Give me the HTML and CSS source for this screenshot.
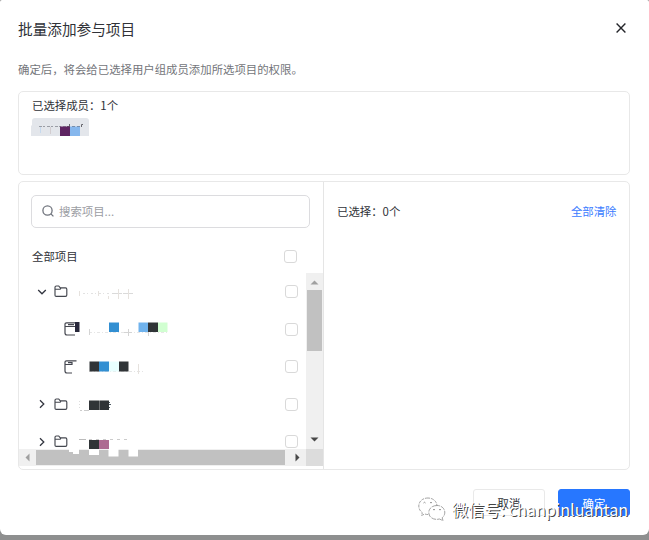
FILE: index.html
```html
<!DOCTYPE html>
<html lang="zh-CN">
<head>
<meta charset="utf-8">
<title>批量添加参与项目</title>
<link rel="stylesheet" href="styles.css">
</head>
<body>
<svg width="0" height="0" class="defs">
  <symbol id="folder" viewBox="0 0 14 13"><path d="M1 10.2V2.3Q1 1 2.3 1H4.7L6.3 2.9H11.5Q12.8 2.9 12.8 4.2V10Q12.8 11.3 11.5 11.3H2.2Q1 11.3 1 10.2ZM1.2 4.2H6.2L7 3"/></symbol>
  <symbol id="down" viewBox="0 0 10 10"><path d="M1.2 3L5 6.8L8.8 3"/></symbol>
  <symbol id="right" viewBox="0 0 10 10"><path d="M3 1.2L6.8 5L3 8.8"/></symbol>
</svg>
<main class="dialog">
  <header class="head">
    <h1>批量添加参与项目</h1>
    <svg class="close" viewBox="0 0 10 10"><path d="M.6 .6L9.4 9.4M9.4 .6L.6 9.4"/></svg>
  </header>
  <p class="hint">确定后，将会给已选择用户组成员添加所选项目的权限。</p>
  <section class="members">
    <div class="label">已选择成员：1个</div>
    <svg class="tag" viewBox="0 0 60 20">
      <path fill="#e3e6eb" d="M2 7V3Q2 0 5 0H56Q59 0 59 3V18H1V8Z"/>
      <path stroke="#9a9da5" stroke-dasharray="3 1 2 2" d="M9 8.500H37"/>
      <path stroke="#66666d" d="M37 8.500H39M39.500 6V9M42 8.500H45M47 8.500H50M51.500 9V6.500H53"/>
      <path stroke="#c5d9ee" d="M10.500 9V15"/><path stroke="#d2cdd0" d="M20.500 9V16"/>
      <path fill="#5e2462" d="M30 8.500H40V18H30Z"/><path fill="#86b7ed" d="M40 8.500H50V18H40Z"/>
    </svg>
  </section>
  <section class="picker">
    <div class="source">
      <div class="search">
        <svg viewBox="0 0 12 12"><circle cx="5.500" cy="5.500" r="4.600"/><path d="M8.900 8.900L11.400 11.400"/></svg>
        <span>搜索项目...</span>
      </div>
      <div class="all"><span>全部项目</span><i class="check"></i></div>
      <div class="scroller">
        <div class="rows">
          <div class="row"><svg class="arrow"><use href="#down"/></svg><svg class="folder"><use href="#folder"/></svg>
            <svg class="mask" viewBox="0 0 100 20"><path stroke="#e2e2e2" stroke-dasharray="1 3 2 2" d="M3 11.500H34"/><path stroke="#dadada" d="M36 11.500H46M47 11.500H57"/><path stroke="#e6e2de" d="M42.500 7V17M52.500 7V17M22.500 9V14M3.500 9V14M32.500 14V17"/></svg><i class="check"></i></div>
          <div class="row child"><svg class="app" viewBox="0 0 16 14"><path d="M11 13H3Q1 13 1 11V2Q1 .8 2.500 .8H14M1 4.500H12M4 2.700H10"/><path class="solid" d="M11 0H15.500V10H11Z"/></svg>
            <svg class="mask" viewBox="0 0 100 20"><path stroke="#e6e6e6" stroke-dasharray="3 2 1 2" d="M4 13.500H82"/><path stroke="#d4d4d4" d="M39 13.500H47M43.500 10V17M4.500 10V16M63.500 13V17"/><path fill="#328fd2" d="M24 3.500H34V13H24Z"/><path fill="#70b3ed" d="M53.500 3.500H63V13H53.500Z"/><path fill="#303437" d="M63 3.500H73V13H63Z"/><path fill="#d1ffd1" d="M73 3.500H82.500V13H73Z"/></svg><i class="check"></i></div>
          <div class="row child"><svg class="app" viewBox="0 0 16 14"><path d="M8 13H3Q1 13 1 11V2Q1 .8 2.500 .8H12.500M1 4.500H8V2M4 2.700H8"/></svg>
            <svg class="mask" viewBox="0 0 100 20"><path stroke="#e4e4e4" stroke-dasharray="3 2 1 2" d="M4 14.500H58"/><path stroke="#e6e2de" d="M53.500 7V17"/><path fill="#303437" d="M4.500 4.500H14V14.500H4.500ZM34 4.500H43.500V14.500H34Z"/><path fill="#328fd2" d="M14 4.500H24V14.500H14Z"/><path fill="#e8ffff" d="M24 4.500H34V14.500H24Z"/></svg><i class="check"></i></div>
          <div class="row"><svg class="arrow"><use href="#right"/></svg><svg class="folder"><use href="#folder"/></svg>
            <svg class="mask" viewBox="0 0 100 20"><path stroke="#ccc" stroke-dasharray="2 2 5 0" d="M4 16.500H13"/><path stroke="#ddd" stroke-dasharray="1 2" d="M3.500 7V16"/><path fill="#303437" d="M13 6.500H23V16H13ZM23.300 6.500H33V16H23.300Z"/><path stroke="#4e5b64" d="M33 8.500H34M33 10.500H35M33 13.500H34"/></svg><i class="check"></i></div>
          <div class="row"><svg class="arrow"><use href="#right"/></svg><svg class="folder"><use href="#folder"/></svg>
            <svg class="mask" viewBox="0 0 100 20"><path stroke="#bbb" stroke-dasharray="7 2 2 1" d="M3 7.500H12"/><path stroke="#ccc" stroke-dasharray="3 4" d="M13 7.500H51"/><path fill="#303437" d="M13 8H23V17.500H13Z"/><path fill="#ad6b91" d="M23 8H33V17.500H23Z"/></svg><i class="check"></i></div>
        </div>
        <div class="vbar"><svg viewBox="0 0 9 5"><path fill="#a0a0a0" d="M.5 4.500L4.500 .5L8.500 4.500Z"/></svg><i></i><svg viewBox="0 0 9 5"><path fill="#484848" d="M.5 .5L4.500 4.500L8.500 .5Z"/></svg></div>
        <div class="hbar"><svg viewBox="0 0 5 9"><path fill="#a0a0a0" d="M4.500 .5L.5 4.500L4.500 8.500Z"/></svg><i></i><svg viewBox="0 0 5 9"><path fill="#484848" d="M.5 .5L4.500 4.500L.5 8.500Z"/></svg></div>
        <div class="corner"></div>
        <svg class="notches" viewBox="0 0 90 8"><path fill="#fff" d="M0 0H10V5H4V3H0ZM20 0H30V6H20ZM39.500 0H49.500V7.500H39.500ZM59.500 0H69V7.500H59.500Z"/></svg>
      </div>
    </div>
    <div class="target"><span>已选择：0个</span><a>全部清除</a></div>
  </section>
  <footer><button>取消</button><button class="primary">确定</button></footer>
</main>
<div class="watermark">
  <svg viewBox="0 0 28 25">
    <g fill="#fff" stroke="#8b8b8b" stroke-width=".8"><path stroke-dasharray="3 1" d="M10 1C4.500 1 .8 4.500 .8 9C.8 12 2.300 14.200 4.300 15.700L3.500 18.500L6.800 17C13 19 19 15 19 9C19 4.500 15 1 10 1Z"/><path stroke-dasharray="5 1" d="M19 8.500C14 8.500 10.800 11.800 10.800 15.500C10.800 20.500 16 23.500 21.500 22L25 23.700L24.200 20.800C29.300 16.500 26.500 8.500 19 8.500Z"/></g>
    <g fill="none" stroke="#777" stroke-width=".8"><path d="M5.500 6Q6.500 4.500 7.500 6M12 6Q13 4.500 14 6M15 13Q16 11.500 17 13M21 13Q22 11.500 23 13"/></g>
  </svg>
  <span>微信号: chanpinluantan</span>
</div>
</body>
</html>
```

FILE: styles.css
```css
* { box-sizing: border-box; }
body {
  margin: 0;
  height: 540px;
  overflow: hidden;
  background: #8e8f8f;
  color: #303238;
  font: 11.4px/16px "Noto Sans CJK SC", sans-serif;
}
svg { display: block; flex: none; fill: none; }
.defs { position: absolute; }
.dialog {
  height: 535px;
  padding: 17px 19px 0 18px;
  border-radius: 2px 2px 6px 6px;
  background: #fff;
}
.head { display: flex; justify-content: space-between; height: 24px; }
h1 { margin: 0; font-size: 14.65px; line-height: 24px; font-weight: 400; }
.close { width: 10px; height: 10px; margin: 6px 4px 0 0; stroke: #24252a; stroke-width: 1.4; }
.hint { margin: 20px 0 14px; color: #73757a; line-height: 16px; }
.members {
  height: 84px;
  padding: 5px 12px;
  border: 1px solid #e8e8e8;
  border-radius: 5px;
}
.label { padding-left: 1px; }
.tag { width: 60px; height: 20px; margin: 5px 0 0 -1px; }
.picker {
  display: flex;
  height: 289px;
  margin-top: 6px;
  border: 1px solid #e8e8e8;
  border-radius: 5px;
}
.source { width: 305px; border-right: 1px solid #e5e5e5; }
.search {
  display: flex;
  align-items: center;
  gap: 5px;
  width: 279px;
  height: 33px;
  margin: 13px 0 0 12px;
  padding: 0 0 1px 10px;
  border: 1px solid #dcdcdf;
  border-radius: 5px;
  color: #9b9da3;
}
.search svg { width: 12px; height: 12px; stroke: #70747d; stroke-width: 1.3; }
.all {
  display: flex;
  align-items: center;
  justify-content: space-between;
  height: 26px;
  margin: 15px 26px 4px 13px;
}
.check { width: 13px; height: 13px; border: 1px solid #d9d9d9; border-radius: 3px; background: #fff; }
.scroller {
  position: relative;
  display: grid;
  grid-template: 176px 17px / 287px 17px;
  height: 193px;
}
.rows { overflow: hidden; }
.row { display: flex; align-items: center; height: 37.500px; padding: 0 8px 0 18px; }
.row .check { margin-left: auto; }
.arrow { width: 10px; height: 10px; stroke: #333640; stroke-width: 1.3; }
.folder { width: 14px; height: 13px; margin-left: 7px; stroke: #44474f; stroke-width: 1.15; }
.mask { width: 100px; height: 20px; margin-left: 8px; }
.child { padding-left: 45px; }
.app { width: 16px; height: 14px; stroke: #44464f; stroke-width: 1.2; }
.app .solid { fill: #28283b; stroke: none; }
.child .mask { margin-left: 5px; }
.vbar { display: flex; flex-direction: column; align-items: center; padding: 7px 0; background: #f0f0f0; }
.vbar svg { width: 9px; height: 5px; }
.vbar i { width: 15px; height: 61px; margin: 5px 0 auto; background: #c1c1c1; }
.hbar { display: flex; align-items: center; padding: 0 6px; background: #f0f0f0; }
.hbar svg { width: 5px; height: 9px; }
.hbar i { width: 249px; height: 15px; margin: 0 auto 0 6px; background: #c1c1c1; }
.corner { background: #dcdcdc; }
.notches { position: absolute; left: 50px; top: 176px; width: 90px; height: 8px; }
.target { display: flex; flex: 1; justify-content: space-between; padding: 21px 12.500px 0 13px; }
.target a { color: #3b7cff; }
footer { display: flex; justify-content: flex-end; gap: 13px; margin-top: 19px; }
button {
  width: 72px;
  height: 27px;
  padding: 0;
  border: 1px solid #e9e9e9;
  border-radius: 3px;
  background: #fff;
  color: #303238;
  font: inherit;
}
.primary { border-color: #2777ff; background: #2777ff; color: #fff; }
.watermark {
  position: absolute;
  left: 418px;
  top: 496px;
  display: flex;
  gap: 6px;
  color: #fff;
  font-size: 16.2px;
  line-height: 26px;
  white-space: nowrap;
  text-shadow: 1px 1px 0 #444;
}
.watermark svg { width: 28px; height: 25px; margin-top: 1px; }
```
